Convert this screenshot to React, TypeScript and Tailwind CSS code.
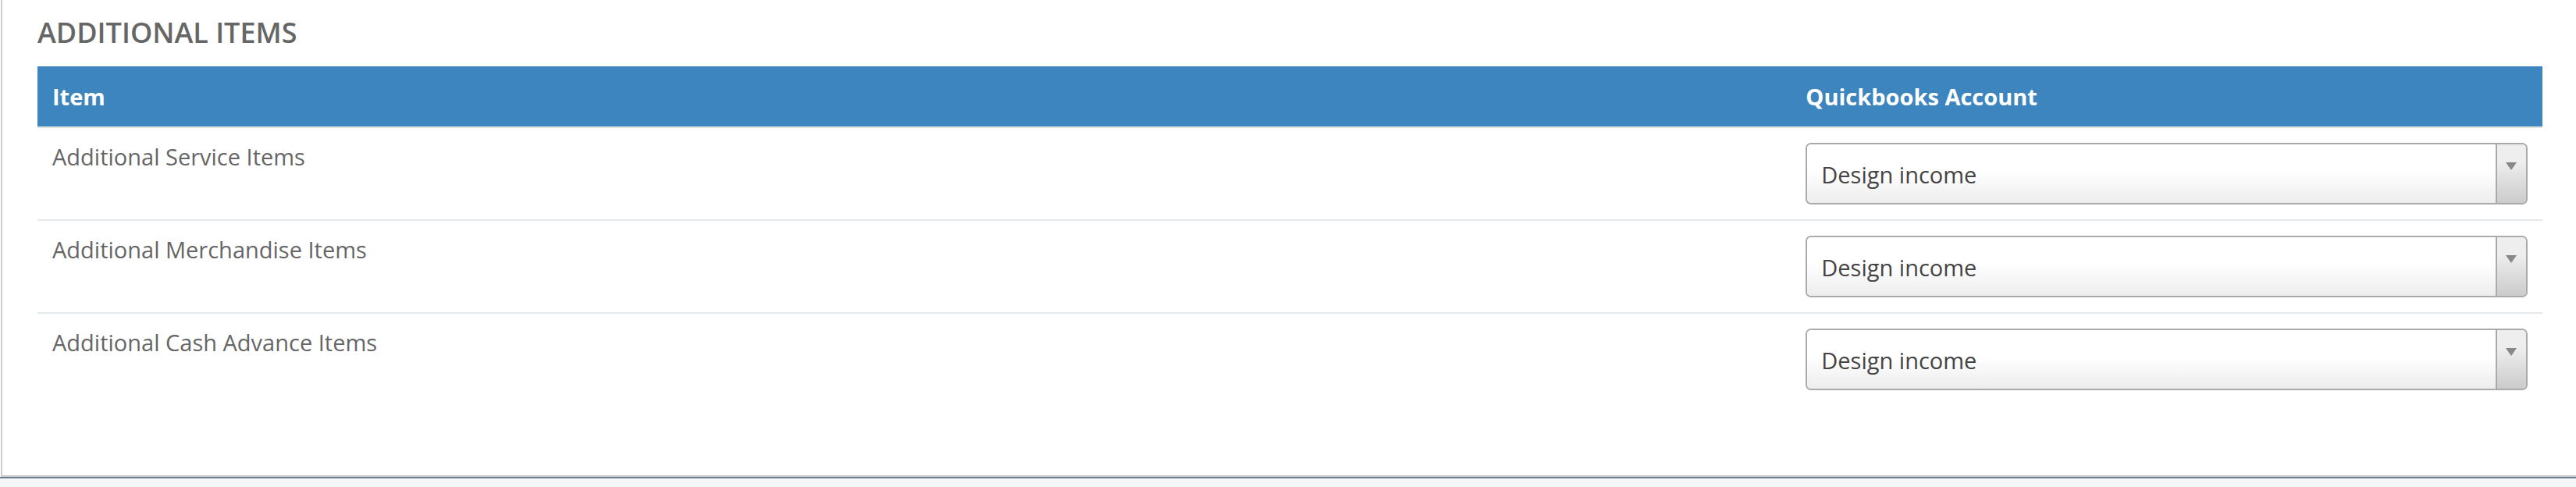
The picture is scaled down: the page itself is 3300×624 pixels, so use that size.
import { FC } from 'react';

const rows = [
  { label: 'Additional Service Items', account: 'Design income' },
  { label: 'Additional Merchandise Items', account: 'Design income' },
  { label: 'Additional Cash Advance Items', account: 'Design income' },
];

const AccountSelect: FC<{ value: string }> = ({ value }) => {
  return (
    <div className="flex h-[79px] w-full overflow-hidden rounded-[7px] border-2 border-[#aaaaaa]">
      <div className="flex flex-1 items-center bg-[linear-gradient(to_bottom,#ffffff_45%,#ededed_100%)] pl-[18px] pt-[2px] text-[29px] text-[#444444]">
        {value}
      </div>
      <div className="flex w-[39px] justify-center border-l-2 border-[#aaaaaa] bg-[linear-gradient(to_bottom,#eeeeee_30%,#cbcbcb_100%)] pt-[23px]">
        <svg width="14" height="10" viewBox="0 0 14 10">
          <path d="M0 0 L14 0 L7 10 Z" fill="#888888" />
        </svg>
      </div>
    </div>
  );
};

export default function App() {
  return (
    <div
      className="h-[624px] w-[3300px] overflow-hidden bg-[#f5f6f7]"
      style={{ fontFamily: '"Open Sans", "Noto Sans", sans-serif' }}
    >
      <div className="bg-white pl-[1px]">
        <div className="border-b-2 border-l-2 border-[#cccccc] pb-[90px] pl-[45px] pr-[43px] pt-[22px]">
          <h2 className="mb-[23px] text-[36px] font-semibold leading-[40px] text-[#666666]">
            ADDITIONAL ITEMS
          </h2>

          {/* Header */}
          <div className="grid h-[77px] grid-cols-[70%_30%] items-center bg-[#3d85be] text-[29px] font-bold text-white">
            <div className="px-[19px]">Item</div>
            <div className="px-[19px]">Quickbooks Account</div>
          </div>
          <div className="h-[2px] bg-[#dde0e0]" />

          {/* Rows */}
          {rows.map((row, i) => (
            <div
              key={row.label}
              className={`grid grid-cols-[70%_30%] ${
                i > 0 ? 'border-t-2 border-[#e6e9ec]' : ''
              }`}
            >
              <div className="px-[19px] pt-[16px] text-[29px] leading-[41px] text-[#666666]">
                {row.label}
              </div>
              <div className="px-[19px] py-[19px]">
                <AccountSelect value={row.account} />
              </div>
            </div>
          ))}
        </div>
      </div>
      <div className="h-[2px] bg-[#6e7f8f]" />
    </div>
  );
}
